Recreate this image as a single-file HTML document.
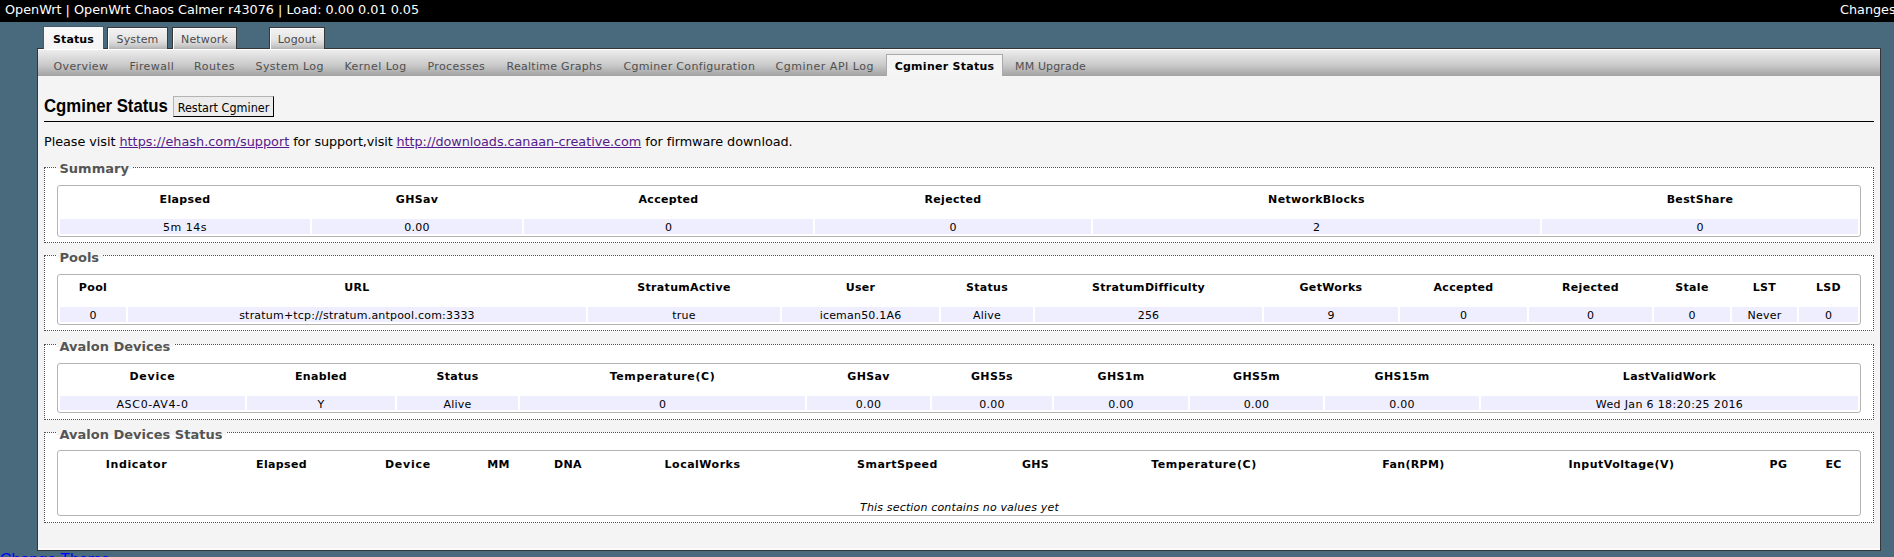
<!DOCTYPE html>
<html lang="en">
<head>
<meta charset="utf-8">
<title>OpenWrt - Cgminer Status - LuCI</title>
<style>
html,body{margin:0;padding:0;}
html{background:#486a7c;}
body{width:1894px;height:557px;overflow:hidden;position:relative;background:#486a7c;
 font-family:"DejaVu Sans","Liberation Sans",sans-serif;font-size:12.8px;color:#000;}
#hdr{position:absolute;left:0;top:0;width:1894px;height:22px;background:#000;color:#fff;
 font-size:12.8px;line-height:22px;white-space:nowrap;}
#hdr .l{position:absolute;left:5px;top:-1px;}
#hdr .r{position:absolute;left:1840px;top:-1px;}
/* main tabs */
.tab{position:absolute;top:27px;height:22px;z-index:2;box-sizing:border-box;border:1px solid #383838;border-bottom:none;
 background:linear-gradient(#f3f3f3 0,#e4e4e4 55%,#cdcdcd 82%,#b2b2b2 100%);color:#4a4a4a;text-align:center;line-height:24px;font-size:11px;letter-spacing:0.15px;
 box-shadow:inset 1px 1px 0 #fff;}
.tab.act{top:26px;height:23px;background:linear-gradient(#fafafa,#f4f4f4);color:#000;font-weight:bold;border-color:#3e5c6c;line-height:25px;box-shadow:none;z-index:3;font-size:11px;letter-spacing:0.1px;}
#main{position:absolute;left:37px;top:48px;width:1842px;height:501px;background:#f4f4f4;border:1px solid #363636;box-shadow:inset 0 -2px 0 #fbfbfb;}
#sub{position:absolute;left:0;top:0;width:1842px;height:27px;background:linear-gradient(#fff 0,#fff 1px,#ededed 1px,#c9c9c9 60%,#a2a2a2 100%);}
#sub span{position:absolute;top:0;height:27px;line-height:35px;font-size:11px;letter-spacing:0.22px;color:#505050;white-space:nowrap;}
#sub span.act{top:5px;height:22px;line-height:23px;background:#f5f5f5;border:1px solid #aaa;border-bottom:none;box-sizing:border-box;
 color:#000;font-weight:bold;text-align:center;font-size:11px;letter-spacing:0.22px;}
h2{position:absolute;left:5.5px;top:46px;margin:0;font-family:"Liberation Sans","DejaVu Sans",sans-serif;font-weight:bold;font-size:18.2px;
 line-height:22px;white-space:nowrap;transform:scaleX(0.922);transform-origin:0 0;}
#btn{position:absolute;left:135px;top:47px;width:101px;height:21px;box-sizing:border-box;border:1px solid;
 border-color:#b4b4b4 #000 #000 #b4b4b4;background:#ececec;font-family:"DejaVu Sans Condensed","DejaVu Sans",sans-serif;
 font-size:12.5px;line-height:22px;text-align:center;color:#000;white-space:nowrap;}
#hr{position:absolute;left:6px;top:72px;width:1830px;height:1px;background:#000;}
#p{position:absolute;left:6px;top:84px;margin:0;line-height:18px;white-space:nowrap;font-size:12.8px;letter-spacing:-0.047px;}
#p a{color:#551a8b;text-decoration:underline;}
fieldset{position:absolute;left:6px;width:1830px;margin:0;padding:0;box-sizing:border-box;border:1px dotted #505050;background:#fff;}
legend{position:absolute;left:11.5px;top:-7.6px;padding:0 4px 0 3px;background:transparent;font-weight:bold;font-size:13px;color:#555;line-height:18px;white-space:nowrap;}
legend i{position:absolute;left:0;right:0;top:6px;height:3px;background:#f4f4f4;z-index:0;}
legend b{position:relative;z-index:1;}
table{position:absolute;left:12px;top:17px;width:1804px;border:1px solid #b4b4b4;border-radius:3px;border-collapse:separate;border-spacing:2px;
 table-layout:fixed;font-size:11px;letter-spacing:0.2px;background:#fff;}
th{font-weight:bold;text-align:center;height:29px;padding:0;vertical-align:top;line-height:23px;font-size:11px;letter-spacing:0.33px;}
fieldset.b table{top:18px;}
fieldset.b th{height:28px;}
fieldset.c legend{top:-7.1px;}
fieldset.c th{line-height:23px;}
fieldset.d th,fieldset.e th{line-height:21px;}
fieldset.d td{padding-top:3px;height:11px;line-height:11px;}
td{text-align:center;height:12px;padding:3px 0 0 0;line-height:12px;background:#eeeeff;}
td.nv{background:transparent;font-style:italic;letter-spacing:0.16px;height:29px;padding:0 0 0 1px;vertical-align:bottom;line-height:11.5px;}
#foot{position:absolute;left:0;top:551px;font-family:"Liberation Sans",sans-serif;font-size:16px;line-height:normal;color:#0000ff;text-decoration:underline;white-space:nowrap;}
</style>
</head>
<body>
<div id="hdr"><span class="l">OpenWrt | OpenWrt Chaos Calmer r43076 | Load: 0.00 0.01 0.05</span><span class="r">Changes: 0</span></div>

<div class="tab act" style="left:43px;width:61px;">Status</div>
<div class="tab" style="left:107px;width:61px;">System</div>
<div class="tab" style="left:172px;width:65px;">Network</div>
<div class="tab" style="left:269px;width:56px;">Logout</div>

<div id="main">
 <div id="sub">
  <span style="left:15.5px;letter-spacing:0.39px">Overview</span>
  <span style="left:91.5px;letter-spacing:0.41px">Firewall</span>
  <span style="left:156px;letter-spacing:0.58px">Routes</span>
  <span style="left:217.5px;letter-spacing:0.42px">System Log</span>
  <span style="left:306.5px;letter-spacing:0.44px">Kernel Log</span>
  <span style="left:389.5px;letter-spacing:0.38px">Processes</span>
  <span style="left:468.5px;letter-spacing:0.28px">Realtime Graphs</span>
  <span style="left:585.5px;letter-spacing:0.33px">Cgminer Configuration</span>
  <span style="left:737.5px;letter-spacing:0.52px">Cgminer API Log</span>
  <span class="act" style="left:848px;width:117px;letter-spacing:0.27px">Cgminer Status</span>
  <span style="left:977px;letter-spacing:0.14px">MM Upgrade</span>
 </div>
 <h2>Cgminer Status</h2>
 <div id="btn">Restart Cgminer</div>
 <div id="hr"></div>
 <p id="p">Please visit <a style="letter-spacing:0.02px">https://ehash.com/support</a><span style="letter-spacing:-0.11px"> for support,visit </span><a>http://downloads.canaan-creative.com</a> for firmware download.</p>

 <fieldset style="top:118px;height:76px;">
  <legend><i></i><b>Summary</b></legend>
  <table>
   <colgroup><col style="width:250px"><col style="width:210px"><col style="width:289px"><col style="width:276px"><col style="width:447px"><col style="width:316px"></colgroup>
   <tr><th>Elapsed</th><th>GHSav</th><th>Accepted</th><th>Rejected</th><th>NetworkBlocks</th><th>BestShare</th></tr>
   <tr><td style="letter-spacing:0.55px">5m 14s</td><td>0.00</td><td>0</td><td>0</td><td>2</td><td>0</td></tr>
  </table>
 </fieldset>

 <fieldset class="b c e" style="top:206px;height:76px;">
  <legend><i></i><b>Pools</b></legend>
  <table>
   <colgroup><col style="width:66px"><col style="width:458px"><col style="width:192px"><col style="width:157px"><col style="width:92px"><col style="width:227px"><col style="width:134px"><col style="width:127px"><col style="width:123px"><col style="width:76px"><col style="width:65px"><col style="width:59px"></colgroup>
   <tr><th>Pool</th><th>URL</th><th>StratumActive</th><th>User</th><th>Status</th><th>StratumDifficulty</th><th>GetWorks</th><th>Accepted</th><th>Rejected</th><th>Stale</th><th>LST</th><th>LSD</th></tr>
   <tr><td>0</td><td>stratum+tcp://stratum.antpool.com:3333</td><td>true</td><td>iceman50.1A6</td><td>Alive</td><td>256</td><td>9</td><td>0</td><td>0</td><td>0</td><td>Never</td><td>0</td></tr>
  </table>
 </fieldset>

 <fieldset class="b c d" style="top:295px;height:76px;">
  <legend><i></i><b>Avalon Devices</b></legend>
  <table>
   <colgroup><col style="width:185px"><col style="width:148px"><col style="width:121px"><col style="width:285px"><col style="width:123px"><col style="width:120px"><col style="width:134px"><col style="width:133px"><col style="width:154px"><col style="width:377px"></colgroup>
   <tr><th style="letter-spacing:0.75px">Device</th><th>Enabled</th><th>Status</th><th style="letter-spacing:0.6px">Temperature(C)</th><th>GHSav</th><th>GHS5s</th><th>GHS1m</th><th>GHS5m</th><th>GHS15m</th><th>LastValidWork</th></tr>
   <tr><td style="letter-spacing:0.7px">ASC0-AV4-0</td><td>Y</td><td>Alive</td><td>0</td><td>0.00</td><td>0.00</td><td>0.00</td><td>0.00</td><td>0.00</td><td style="letter-spacing:0.35px">Wed Jan 6 18:20:25 2016</td></tr>
  </table>
 </fieldset>

 <fieldset class="c" style="top:383px;height:91px;">
  <legend><i></i><b>Avalon Devices Status</b></legend>
  <table class="t4" style="height:66px;">
   <colgroup><col style="width:153px"><col style="width:133px"><col style="width:116px"><col style="width:61px"><col style="width:74px"><col style="width:191px"><col style="width:195px"><col style="width:77px"><col style="width:256px"><col style="width:159px"><col style="width:253px"><col style="width:57px"><col style="width:49px"></colgroup>
   <tr><th style="letter-spacing:0.66px">Indicator</th><th>Elapsed</th><th style="letter-spacing:0.75px">Device</th><th>MM</th><th>DNA</th><th style="letter-spacing:0.5px">LocalWorks</th><th style="letter-spacing:0.47px">SmartSpeed</th><th>GHS</th><th style="letter-spacing:0.6px">Temperature(C)</th><th>Fan(RPM)</th><th style="letter-spacing:0.5px">InputVoltage(V)</th><th>PG</th><th>EC</th></tr>
   <tr><td colspan="13" class="nv">This section contains no values yet</td></tr>
  </table>
 </fieldset>
</div>
<div id="foot">Change Theme</div>
</body>
</html>
